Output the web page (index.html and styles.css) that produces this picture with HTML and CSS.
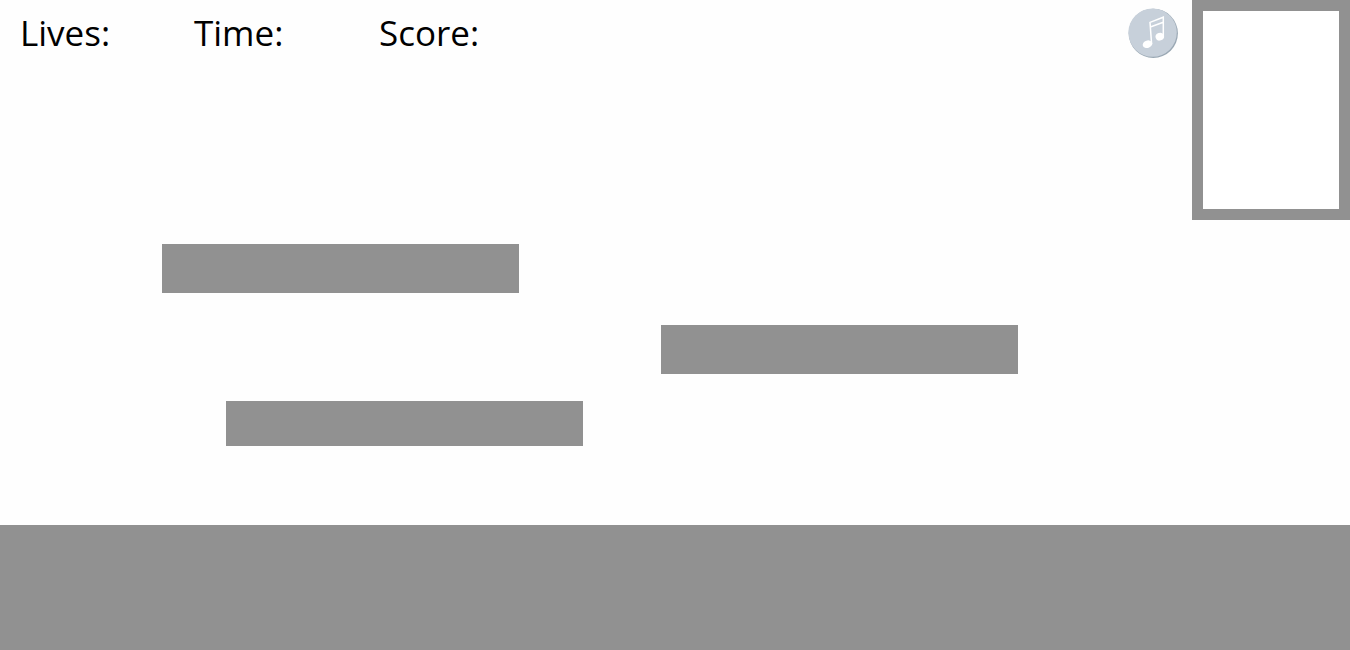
FILE: index.html
```html
<!DOCTYPE html>
<html lang="en">
<head>
<meta charset="utf-8">
<title>Platform game</title>
<link rel="stylesheet" href="styles.css">
</head>
<body>
<main class="game">
  <header class="hud">
    <div class="stats">
      <span class="stat">Lives:</span>
      <span class="stat">Time:</span>
      <span class="stat">Score:</span>
    </div>
    <button class="music" type="button" aria-label="Toggle music">
      <svg class="music-icon" viewBox="0 0 50 50" aria-hidden="true">
        <circle cx="25.3" cy="25.3" r="24.6" fill="#9aa8b4"/>
        <circle cx="24.6" cy="24.6" r="24.2" fill="#c7d0da"/>
        <g fill="#fff">
          <ellipse cx="19.5" cy="36.2" rx="4.9" ry="3.7" transform="rotate(-18 19.5 36.2)"/>
          <ellipse cx="31.8" cy="28.7" rx="4.3" ry="3.8" transform="rotate(-18 31.8 28.7)"/>
        </g>
        <path d="M23.6 36 L22 14.4 L35.3 9.2 L35.3 28.6 M22.3 19 L35.3 14.2" fill="none" stroke="#fff" stroke-width="1.5"/>
      </svg>
    </button>
    <div class="panel"></div>
  </header>
  <div class="platform platform-upper"></div>
  <div class="platform platform-right"></div>
  <div class="platform platform-lower"></div>
  <div class="ground"></div>
</main>
</body>
</html>
```
FILE: styles.css
```css
* {
  box-sizing: border-box;
}

body {
  margin: 0;
  background: #fefefe;
  color: #000;
  font-family: "Open Sans", "Noto Sans", sans-serif;
}

.game {
  position: relative;
  display: flex;
  flex-direction: column;
  justify-content: space-between;
  min-height: 100vh;
}

.hud {
  display: flex;
  align-items: flex-start;
}

.stats {
  display: grid;
  flex: 1;
  grid-template-columns: 174px 185px auto;
  padding: 8px 0 0 20px;
}

.stat {
  font-size: 35px;
  line-height: 50px;
}

.music {
  width: 50px;
  height: 50px;
  margin: 8px 14px 0 0;
  padding: 0;
  border: 0;
  border-radius: 50%;
  background: none;
  cursor: pointer;
}

.music-icon {
  display: block;
  width: 100%;
  height: 100%;
}

.panel {
  width: 158px;
  height: 220px;
  border: 11px solid #919191;
  background: #fff;
}

/* Platforms sit at free coordinates in the level. */
.platform {
  position: absolute;
  width: 357px;
  height: 49px;
  background: #919191;
}

.platform-upper {
  left: 162px;
  top: 244px;
}

.platform-right {
  left: 661px;
  top: 325px;
}

.platform-lower {
  left: 226px;
  top: 401px;
  height: 45px;
}

.ground {
  height: 125px;
  background: #919191;
}
```
